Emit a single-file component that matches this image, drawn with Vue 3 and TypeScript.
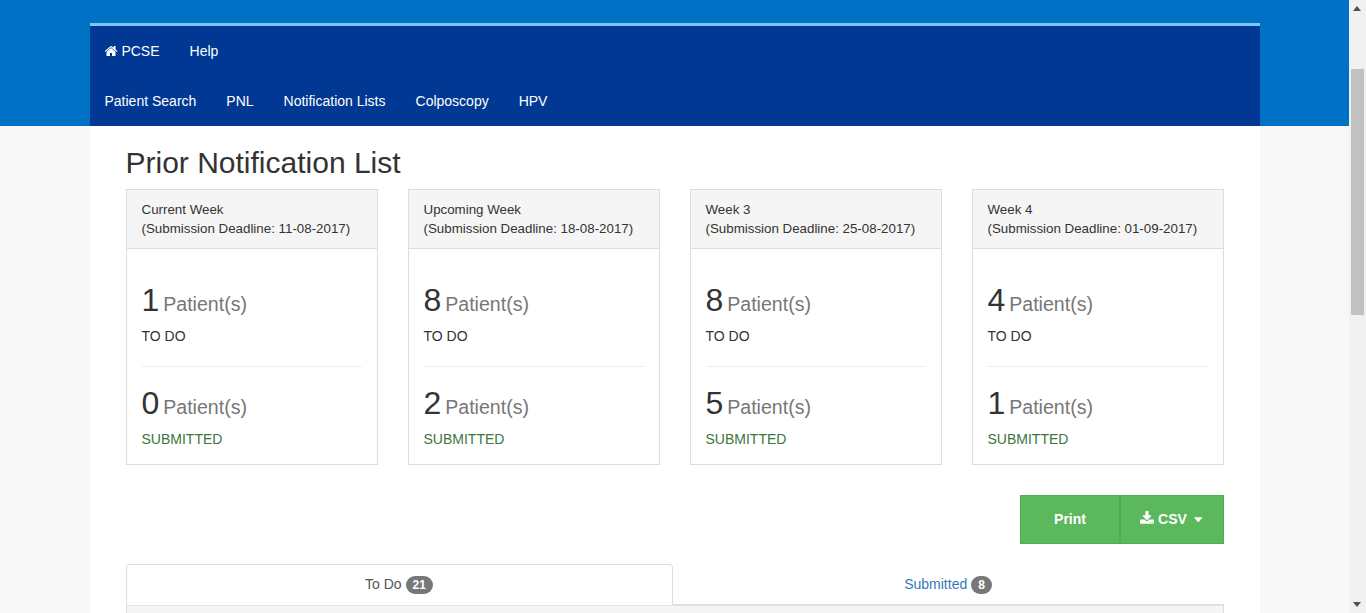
<script setup lang="ts">
interface Week {
  title: string
  deadline: string
  todo: number
  submitted: number
}
const weeks: Week[] = [
  { title: 'Current Week', deadline: '11-08-2017', todo: 1, submitted: 0 },
  { title: 'Upcoming Week', deadline: '18-08-2017', todo: 8, submitted: 2 },
  { title: 'Week 3', deadline: '25-08-2017', todo: 8, submitted: 5 },
  { title: 'Week 4', deadline: '01-09-2017', todo: 4, submitted: 1 },
]
const links = ['Patient Search', 'PNL', 'Notification Lists', 'Colposcopy', 'HPV']
</script>

<template>
  <div class="viewport">
    <div class="page">
      <header class="band">
        <nav class="nav">
          <ul class="nav-row">
            <li>
              <a>
                <svg class="home" viewBox="64 0 1664 1792" aria-hidden="true"><path fill="#fff" d="M1408 992v480q0 26-19 45t-45 19h-384v-384h-256v384h-384q-26 0-45-19t-19-45v-480q0-1 .5-3t.5-3l575-474 575 474q1 2 1 6zm223-69l-62 74q-8 9-21 11h-3q-13 0-21-7l-692-577-692 577q-12 8-24 7-13-2-21-11l-62-74q-8-10-7-23.5t11-21.5l719-599q32-26 76-26t76 26l244 204v-195q0-14 9-23t23-9h192q14 0 23 9t9 23v408l219 182q10 8 11 21.5t-7 23.5z"/></svg>
                PCSE
              </a>
            </li>
            <li><a>Help</a></li>
          </ul>
          <ul class="nav-row">
            <li v-for="link in links" :key="link"><a>{{ link }}</a></li>
          </ul>
        </nav>
      </header>

      <main class="container">
        <h2 class="title">Prior Notification List</h2>

        <section class="cards">
          <article v-for="w in weeks" :key="w.title" class="card">
            <div class="card-head">
              <div>{{ w.title }}</div>
              <div>(Submission Deadline: {{ w.deadline }})</div>
            </div>
            <div class="card-body">
              <div class="stat first">
                <div class="count"><span class="num">{{ w.todo }}</span> <span class="unit">Patient(s)</span></div>
                <div class="label">TO DO</div>
              </div>
              <hr class="rule" />
              <div class="stat">
                <div class="count"><span class="num">{{ w.submitted }}</span> <span class="unit">Patient(s)</span></div>
                <div class="label done">SUBMITTED</div>
              </div>
            </div>
          </article>
        </section>

        <div class="actions">
          <button class="btn print" type="button">Print</button>
          <button class="btn csv" type="button">
            <svg class="dl" viewBox="64 0 1664 1792" aria-hidden="true"><path fill="#fff" d="M1344 1344q0-26-19-45t-45-19-45 19-19 45 19 45 45 19 45-19 19-45zm256 0q0-26-19-45t-45-19-45 19-19 45 19 45 45 19 45-19 19-45zm128-224v320q0 40-28 68t-68 28h-1472q-40 0-68-28t-28-68v-320q0-40 28-68t68-28h465l135 136q58 56 136 56t136-56l136-136h464q40 0 68 28t28 68zm-325-569q17 41-14 70l-448 448q-18 19-45 19t-45-19l-448-448q-31-29-14-70 17-39 59-39h256v-448q0-26 19-45t45-19h256q26 0 45 19t19 45v448h256q42 0 59 39z"/></svg>
            CSV
            <span class="caret"></span>
          </button>
        </div>

        <div class="tabs">
          <a class="tab active">To Do <span class="badge">21</span></a>
          <a class="tab">Submitted <span class="badge">8</span></a>
        </div>
        <div class="tab-panel"></div>
      </main>
    </div>

    <aside class="scrollbar" aria-hidden="true">
      <span class="arrow up"></span>
      <div class="track"><div class="thumb"></div></div>
      <span class="arrow down"></span>
    </aside>
  </div>
</template>

<style>
html, body { margin: 0; height: 100%; overflow: hidden; }
</style>

<style scoped>
* { box-sizing: border-box; }
.viewport {
  display: flex;
  height: 613px;
  overflow: hidden;
  font-family: "Liberation Sans", Arial, sans-serif;
  font-size: 14px;
  line-height: 20px;
  color: #333;
}
.page { flex: 1; min-width: 0; background: #f8f8f8; overflow: hidden; }
.band { background: #0072c6; padding-top: 23px; }
.nav {
  width: 1170px;
  margin: 0 auto;
  background: #003893;
  border-top: 3px solid #7fc4fd;
}
.nav-row { display: flex; list-style: none; margin: 0; padding: 0; height: 50px; }
.nav-row a { display: block; padding: 15px; color: #fff; }
.home { width: 13px; height: 14px; vertical-align: -2px; }
.container {
  width: 1170px;
  margin: 0 auto;
  background: #fff;
  padding: 0 36px;
  height: 487px;
  overflow: hidden;
}
.title { margin: 20px 0 10px; font-size: 30px; font-weight: 400; line-height: 33px; color: #333; }
.cards { display: grid; grid-template-columns: repeat(4, 252px); column-gap: 30px; }
.card { border: 1px solid #ddd; height: 276px; }
.card-head {
  background: #f5f5f5;
  border-bottom: 1px solid #ddd;
  height: 59px;
  padding: 10px 15px;
  font-size: 13.33px;
  line-height: 19px;
}
.card-body { padding: 0 15px; }
.stat.first { padding-top: 31px; }
.count { line-height: 40px; height: 40px; }
.num { font-size: 32px; }
.unit { font-size: 19.6px; color: #777; }
.label { margin-top: 6px; }
.label.done { color: #3c763d; }
.rule { border: 0; border-top: 1px solid #eee; margin: 20px 0 16px; }
.actions { display: flex; justify-content: flex-end; margin-top: 30px; }
.btn {
  height: 49px;
  border: 1px solid #4cae4c;
  background: #5cb85c;
  color: #fff;
  font: bold 14px/20px "Liberation Sans", Arial, sans-serif;
  padding: 0 0 2px;
}
.print { width: 100px; padding-left: 1px; }
.csv { width: 104px; }
.dl { width: 14px; height: 15px; vertical-align: -2px; }
.caret {
  display: inline-block;
  width: 9px;
  height: 5px;
  margin-left: 3px;
  vertical-align: middle;
  background: #fff;
  clip-path: polygon(0 0, 100% 0, 50% 100%);
}
.tabs { display: flex; margin-top: 20px; height: 41px; border-bottom: 1px solid #ddd; }
.tab {
  flex: 1;
  text-align: center;
  padding: 9px 15px;
  color: #337ab7;
  height: 41px;
  border: 1px solid transparent;
  border-radius: 4px 4px 0 0;
}
.tab.active {
  flex: 0 0 547px;
  color: #555;
  background: #fff;
  border-color: #ddd;
  border-bottom-color: #fff;
}
.badge {
  display: inline-block;
  min-width: 10px;
  padding: 3px 7px;
  font-size: 12px;
  font-weight: 700;
  line-height: 12px;
  color: #fff;
  text-align: center;
  background: #777;
  border-radius: 10px;
  vertical-align: middle;
}
.tab-panel { height: 20px; background: #f5f5f5; border: 1px solid #ddd; border-top-color: #e4e4e4; }
.scrollbar {
  flex: 0 0 17px;
  width: 17px;
  background: #f1f1f1;
  display: flex;
  flex-direction: column;
  align-items: center;
}
.arrow { flex: 0 0 17px; width: 17px; position: relative; }
.arrow::after {
  content: "";
  position: absolute;
  left: 4px;
  width: 0;
  height: 0;
  border-left: 4px solid transparent;
  border-right: 4px solid transparent;
}
.arrow.up::after { top: 6px; border-bottom: 5px solid #505050; }
.arrow.down::after { top: 6px; border-top: 5px solid #505050; }
.track { flex: 1; width: 100%; padding: 52px 2px 0 2px; }
.thumb { height: 246px; background: #c1c1c1; }
</style>
